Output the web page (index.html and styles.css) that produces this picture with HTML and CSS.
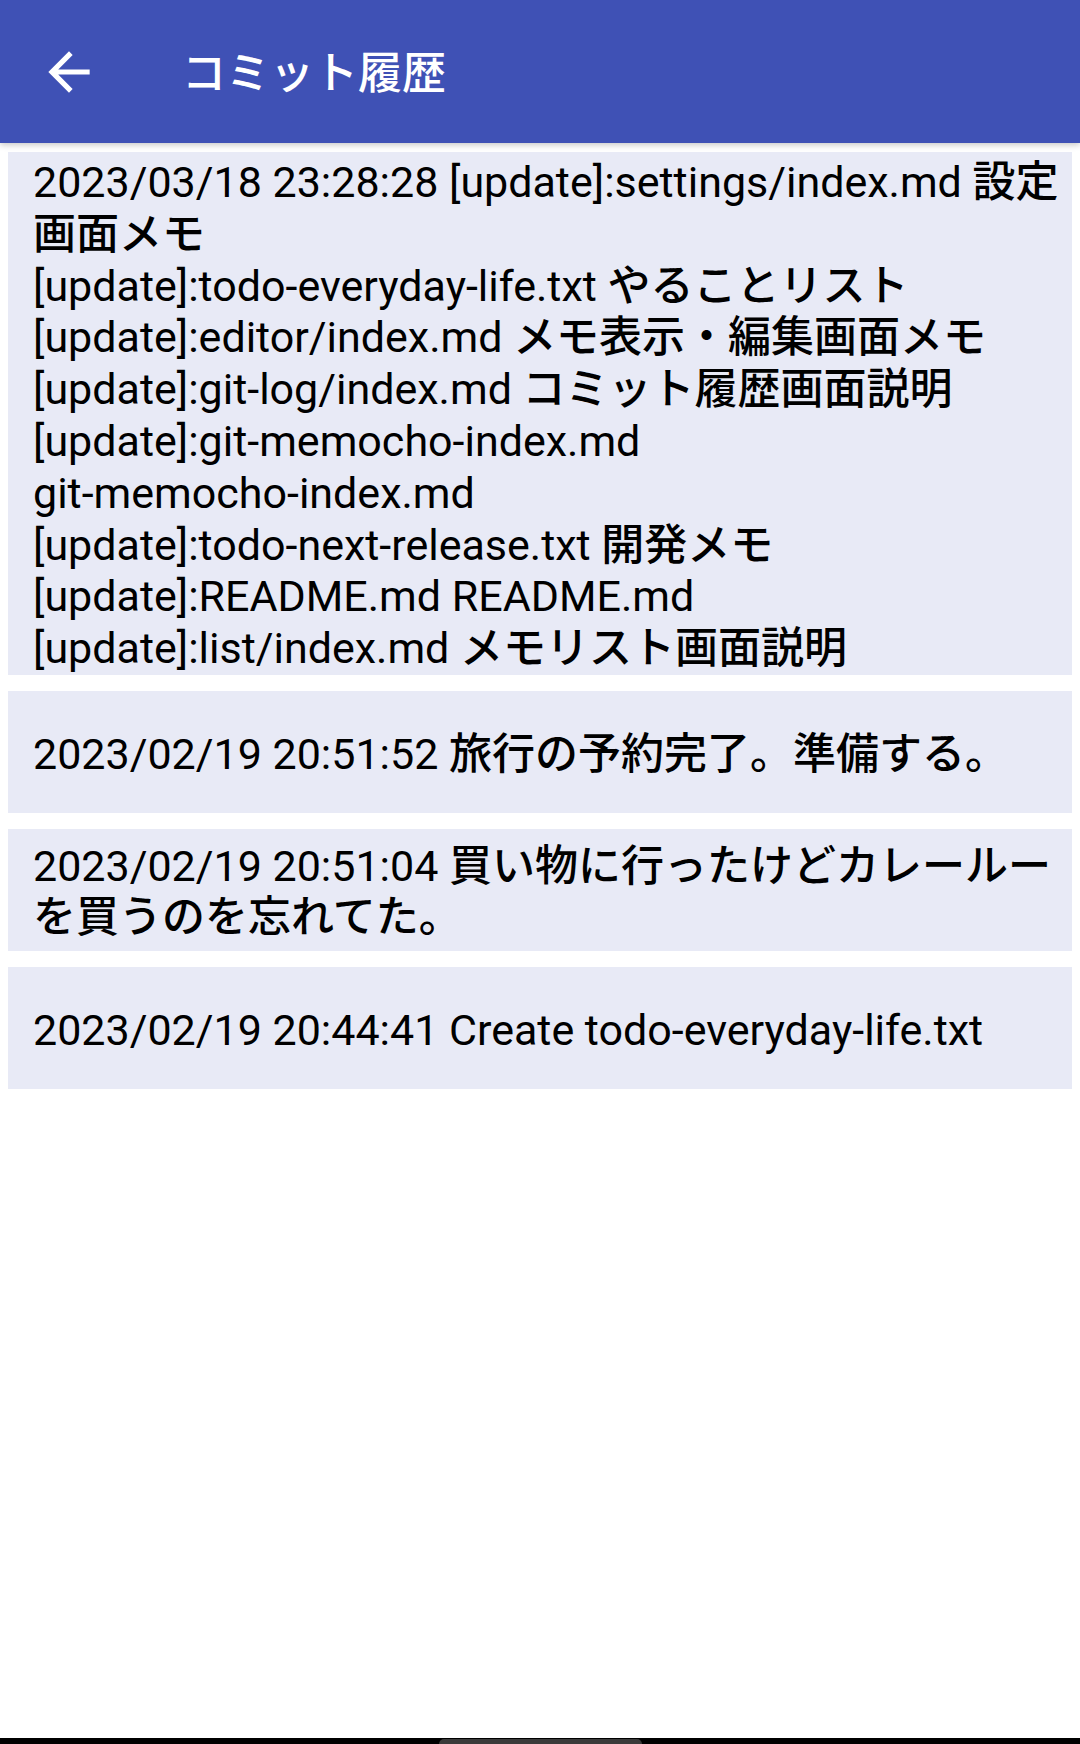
FILE: index.html
```html
<!DOCTYPE html>
<html lang="ja">
<head>
<meta charset="utf-8">
<title>コミット履歴</title>
<link rel="stylesheet" href="styles.css">
</head>
<body>
<div class="screen">
  <header class="appbar">
    <svg class="back" viewBox="0 0 24 24" aria-hidden="true"><path d="M20 11H7.83l5.59-5.59L12 4l-8 8 8 8 1.41-1.41L7.83 13H20v-2z"/></svg>
    <h1 class="title">コミット履歴</h1>
  </header>
  <main class="list">
    <div class="card"><p class="msg">2023/03/18 23:28:28 [update]:settings/index.md <span class="ja">設定画面メモ</span><br>[update]:todo-everyday-life.txt <span class="ja">やることリスト</span><br>[update]:editor/index.md <span class="ja">メモ表示・編集画面メモ</span><br>[update]:git-log/index.md <span class="ja">コミット履歴画面説明</span><br>[update]:git-memocho-index.md<br>git-memocho-index.md<br>[update]:todo-next-release.txt <span class="ja">開発メモ</span><br>[update]:README.md README.md<br>[update]:list/index.md <span class="ja">メモリスト画面説明</span></p></div>
    <div class="card"><p class="msg">2023/02/19 20:51:52 <span class="ja">旅行の予約完了。準備する。</span></p></div>
    <div class="card"><p class="msg">2023/02/19 20:51:04 <span class="ja">買い物に行ったけどカレールーを買うのを忘れてた。</span></p></div>
    <div class="card"><p class="msg">2023/02/19 20:44:41 Create todo-everyday-life.txt</p></div>
  </main>
  <div class="navbar"><span class="pill"></span></div>
</div>
</body>
</html>
```
FILE: styles.css
```css
html, body {
  margin: 0;
  padding: 0;
  background: #ffffff;
}
.screen {
  width: 1080px;
  height: 1744px;
  display: flex;
  flex-direction: column;
  font-family: "Roboto", "Noto Sans CJK JP", sans-serif;
}
.appbar {
  height: 143px;
  flex: none;
  background: #3f51b5;
  display: flex;
  align-items: center;
  box-shadow: 0 2px 6px rgba(0, 0, 0, 0.22);
  position: relative;
  z-index: 1;
}
.back {
  width: 62px;
  height: 62px;
  fill: #ffffff;
  margin-left: 38px;
  flex: none;
}
.title {
  margin: 0 0 0 82px;
  color: #ffffff;
  font-family: "Noto Sans CJK JP", sans-serif;
  font-weight: 500;
  font-size: 44px;
  line-height: 1;
  padding-bottom: 3px;
}
.list {
  flex: 1;
  display: flex;
  flex-direction: column;
  gap: 16px;
  padding: 9px 8px 0;
}
.card {
  background: #e8eaf6;
  min-height: 122px;
  display: flex;
  align-items: center;
  padding: 0 6px 0 25px;
}
.msg {
  margin: 0;
  padding-top: 5px;
  font-size: 43px;
  line-height: 51.8px;
  color: #000000;
}
.ja {
  font-family: "Noto Sans CJK JP", sans-serif;
  font-weight: 500;
  line-height: 1;
}
.navbar {
  height: 6px;
  flex: none;
  background: #000000;
  display: flex;
  justify-content: center;
  align-items: flex-end;
}
.pill {
  width: 203px;
  height: 5px;
  background: #3a3a3a;
  border-radius: 8px 8px 0 0;
}
```
